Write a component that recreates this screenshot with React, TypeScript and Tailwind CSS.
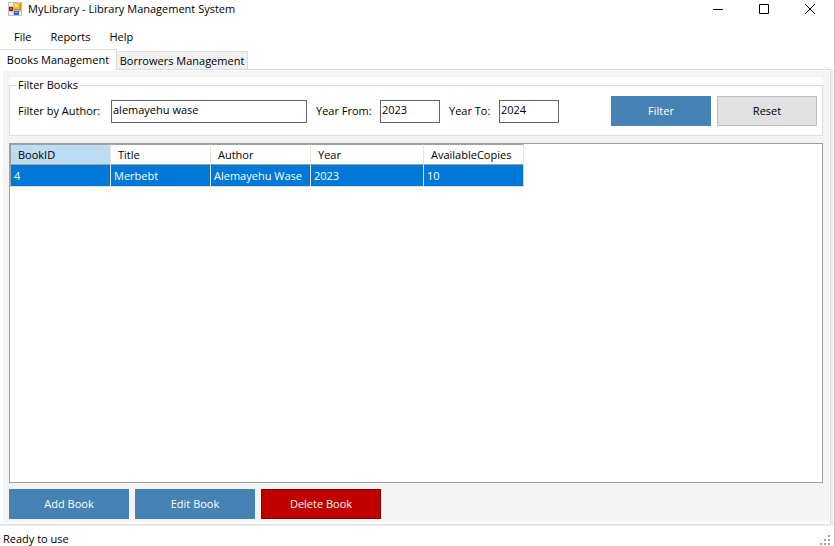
import type { ReactNode } from "react";

const columns = [
  { name: "BookID", width: "w-[101px]" },
  { name: "Title", width: "w-[100px]" },
  { name: "Author", width: "w-[100px]" },
  { name: "Year", width: "w-[113px]" },
  { name: "AvailableCopies", width: "w-[100px]" },
];

const books = [["4", "Merbebt", "Alemayehu Wase", "2023", "10"]];

function AppIcon() {
  return (
    <svg width="14" height="14" viewBox="0 0 14 14" shapeRendering="crispEdges" aria-hidden="true">
      <rect width="14" height="14" fill="#c4c4c4" />
      <rect x="1" y="1" width="4" height="3" fill="#f4f4f4" />
      <rect x="1" y="10" width="4" height="3" fill="#f4f4f4" />
      <rect x="11" y="10" width="2" height="3" fill="#f4f4f4" />
      <rect x="1" y="5" width="4" height="4" fill="#a31515" />
      <rect x="2" y="6" width="2" height="2" fill="#e0544a" />
      <rect x="6" y="1" width="7" height="7" fill="#c58a08" />
      <rect x="6" y="1" width="6" height="6" fill="#f0b92c" />
      <rect x="7" y="2" width="3" height="3" fill="#ffe08a" />
      <rect x="6" y="9" width="5" height="4" fill="#2f63cf" />
      <rect x="7" y="10" width="3" height="1" fill="#86acf5" />
    </svg>
  );
}

function WindowButton({ label, children }: { label: string; children: ReactNode }) {
  return (
    <button type="button" aria-label={label} className="flex h-[18px] w-[46px] items-center justify-center">
      <svg width="10" height="10" viewBox="0 0 10 10" fill="none" stroke="#000" aria-hidden="true">
        {children}
      </svg>
    </button>
  );
}

type FieldProps = { id: string; label: string; value: string; labelWidth: string; width: string };

function Field({ id, label, value, labelWidth, width }: FieldProps) {
  return (
    <div className="flex items-center">
      <label htmlFor={id} className={`whitespace-nowrap ${labelWidth}`}>
        {label}
      </label>
      <input
        id={id}
        defaultValue={value}
        className={`h-[23px] border border-[#646464] bg-white px-px pb-[3px] outline-none ${width}`}
      />
    </div>
  );
}

export default function App() {
  return (
    <div className="flex h-screen flex-col border-r border-[#c8c8c8] bg-white font-['Open_Sans','Noto_Sans',sans-serif] text-[11px] leading-4 text-black">
      <header className="flex h-5 items-start pt-px pr-px pl-2">
        <div className="pt-px">
          <AppIcon />
        </div>
        <h1 className="flex-1 pl-[6px] text-[11px]">MyLibrary - Library Management System</h1>
        <div className="-mt-px flex">
          <WindowButton label="Minimize">
            <path d="M0 5.5h10" />
          </WindowButton>
          <WindowButton label="Maximize">
            <path d="M.5.5h9v9h-9z" />
          </WindowButton>
          <WindowButton label="Close">
            <path d="M0 0l10 10M10 0L0 10" />
          </WindowButton>
        </div>
      </header>

      <nav className="flex h-[29px] items-center gap-[19px] pt-1 pl-[14px]">
        <button type="button">File</button>
        <button type="button">Reports</button>
        <button type="button">Help</button>
      </nav>

      <div role="tablist" className="flex h-[21px] items-end">
        <button
          type="button"
          role="tab"
          aria-selected="true"
          className="h-[21px] w-[117px] whitespace-nowrap border-t border-r border-[#dcdcdc] bg-white text-center"
        >
          Books Management
        </button>
        <button
          type="button"
          role="tab"
          aria-selected="false"
          className="h-[19px] w-[131px] whitespace-nowrap border-y border-r border-[#dcdcdc] bg-[#f0f0f0] text-center"
        >
          Borrowers Management
        </button>
        <div className="mr-[3px] h-px flex-1 bg-[#dcdcdc]" />
      </div>

      <div className="flex min-h-0 flex-1 flex-col bg-[#f0f0f0] pr-[3px]">
        <main className="flex min-h-0 flex-1 flex-col border-r border-b border-[#dcdcdc] bg-white pt-px pr-px pb-[2px] pl-[3px]">
          <div className="flex min-h-0 flex-1 flex-col bg-[#f4f4f4] px-[6px] pt-[6px] pb-[3px]">
            <section className="bg-white">
              <fieldset className="h-[59px] border border-[#dcdcdc] px-[5px]">
                <legend className="ml-px px-[2px]">Filter Books</legend>
                <div className="flex items-center gap-[9px] pt-[3px] pl-[3px]">
                  <Field id="author" label="Filter by Author:" value="alemayehu wase" labelWidth="w-[93px]" width="w-[196px]" />
                  <Field id="from" label="Year From:" value="2023" labelWidth="w-16" width="w-[60px]" />
                  <Field id="to" label="Year To:" value="2024" labelWidth="w-[50px]" width="w-[60px]" />
                  <div className="ml-auto flex gap-[6px]">
                    <button type="button" className="h-[30px] w-[100px] bg-[#4682b4] text-white">
                      Filter
                    </button>
                    <button type="button" className="h-[30px] w-[100px] border border-[#bebebe] bg-[#e1e1e1]">
                      Reset
                    </button>
                  </div>
                </div>
              </fieldset>
            </section>

            <section className="mt-[7px] min-h-0 flex-1 border border-[#a0a0a0] bg-white">
              <table className="w-[514px] table-fixed border-separate border-spacing-0 text-left">
                <thead>
                  <tr className="h-[21px]">
                    {columns.map((column, index) => (
                      <th
                        key={column.name}
                        scope="col"
                        className={`border-t border-r border-b border-t-[#a0a0a0] border-r-[#e5e5e5] border-b-[#a0a0a0] p-0 pl-[7px] font-normal first:border-l first:border-l-[#a0a0a0] ${column.width} ${index === 0 ? "bg-[#bcdcf4]" : "bg-white"}`}
                      >
                        {column.name}
                      </th>
                    ))}
                  </tr>
                </thead>
                <tbody>
                  {books.map((book) => (
                    <tr key={book[0]} className="h-[22px] bg-[#0078d7] text-white">
                      {book.map((value, index) => (
                        <td
                          key={columns[index].name}
                          className="whitespace-nowrap border-r border-b border-[#dcdcdc] p-0 pl-[3px] first:border-l first:border-l-[#a0a0a0]"
                        >
                          {value}
                        </td>
                      ))}
                    </tr>
                  ))}
                </tbody>
              </table>
            </section>

            <div className="mt-[6px] flex gap-[6px]">
              <button type="button" className="h-[30px] w-[120px] bg-[#4682b4] text-white">
                Add Book
              </button>
              <button type="button" className="h-[30px] w-[120px] bg-[#4682b4] text-white">
                Edit Book
              </button>
              <button type="button" className="h-[30px] w-[120px] border border-[#800000] bg-[#c00000] text-white">
                Delete Book
              </button>
            </div>
          </div>
        </main>
      </div>

      <footer className="flex h-[21px] items-end justify-between border-t border-[#f0f0f0] pr-[3px] pl-[3px]">
        <span className="self-center pt-[5px]">Ready to use</span>
        <svg width="11" height="11" viewBox="0 0 11 11" fill="#a0a0a0" shapeRendering="crispEdges" aria-hidden="true">
          <path d="M8 0h2v2h-2zM4 4h2v2h-2zM8 4h2v2h-2zM0 8h2v2h-2zM4 8h2v2h-2zM8 8h2v2h-2z" />
        </svg>
      </footer>
    </div>
  );
}
